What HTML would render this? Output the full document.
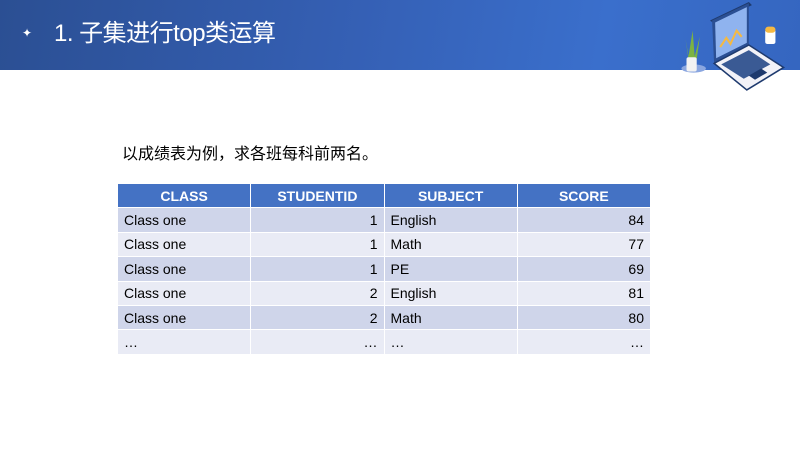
<!DOCTYPE html><html><head><meta charset="utf-8"><style>
body{margin:0;width:800px;height:450px;overflow:hidden;background:#fff;font-family:"Liberation Sans","Noto Sans CJK SC",sans-serif;position:relative}
.hd{position:absolute;left:0;top:0;width:800px;height:70px;background:linear-gradient(100deg,#2b4f93 0%,#3560b5 45%,#3a6fcc 75%,#3566c0 100%)}
.t{position:absolute;left:54px;top:17px;color:#fff;font-size:24px;line-height:34px;letter-spacing:-0.5px}
.st{position:absolute;left:22px;top:26px;color:#fff;font-size:12px}
.p{position:absolute;left:122px;top:140px;font-size:16px;color:#000}
table{position:absolute;left:117px;top:183px;border-collapse:collapse;font-size:14px;table-layout:fixed;width:534px}
td,th{height:24.4px;padding:0 6px;border:1px solid #fff;box-sizing:border-box}
th{background:#4472c4;color:#fff;font-weight:bold}
tr:nth-child(even) td{background:#cfd5ea}
tr:nth-child(odd) td{background:#e9ebf5}
.r{text-align:right}
</style></head><body>
<div class="hd"></div>
<div class="st">✦</div>
<div class="t">1. 子集进行top类运算</div>
<svg style="position:absolute;left:670px;top:0" width="125" height="92" viewBox="0 0 120 90">
<ellipse cx="22" cy="67" rx="12" ry="4" fill="#8aa6e0"/>
<path d="M14 38 L17 55 L21 30 L23 55 L28 36 L25 58 L17 58Z" fill="#7cb342"/>
<rect x="15" y="56" width="10" height="14" rx="2" fill="#f2f2f2"/>
<path d="M38 20 L76 2 L79 5 L42 23 Z" fill="#1e3a6e"/>
<path d="M40 20 L76 3 L76 44 L42 62 Z" fill="#2b4f93"/>
<path d="M43 22 L74 7 L74 42 L44 57 Z" fill="#8fb3ef"/>
<path d="M48 46 L54 37 L58 43 L64 30 L69 36" stroke="#f5b942" stroke-width="2" fill="none"/>
<path d="M42 62 L76 44 L110 66 L74 88 Z" fill="#f2f2f8" stroke="#1e3a6e" stroke-width="1.5"/>
<path d="M49 63 L76 49 L97 63 L71 77 Z" fill="#3a5a94"/>
<path d="M76 74 L88 67 L94 71 L82 78 Z" fill="#1e3a6e"/>
<rect x="92" y="29" width="10" height="14" rx="2" fill="#fff"/>
<rect x="92" y="26" width="10" height="6" rx="3" fill="#f5b942"/>
</svg>
<div class="p">以成绩表为例，求各班每科前两名。</div>
<table>
<tr><th>CLASS</th><th>STUDENTID</th><th>SUBJECT</th><th>SCORE</th></tr>
<tr><td>Class one</td><td class="r">1</td><td>English</td><td class="r">84</td></tr>
<tr><td>Class one</td><td class="r">1</td><td>Math</td><td class="r">77</td></tr>
<tr><td>Class one</td><td class="r">1</td><td>PE</td><td class="r">69</td></tr>
<tr><td>Class one</td><td class="r">2</td><td>English</td><td class="r">81</td></tr>
<tr><td>Class one</td><td class="r">2</td><td>Math</td><td class="r">80</td></tr>
<tr><td>…</td><td class="r">…</td><td>…</td><td class="r">…</td></tr>
</table>
</body></html>
